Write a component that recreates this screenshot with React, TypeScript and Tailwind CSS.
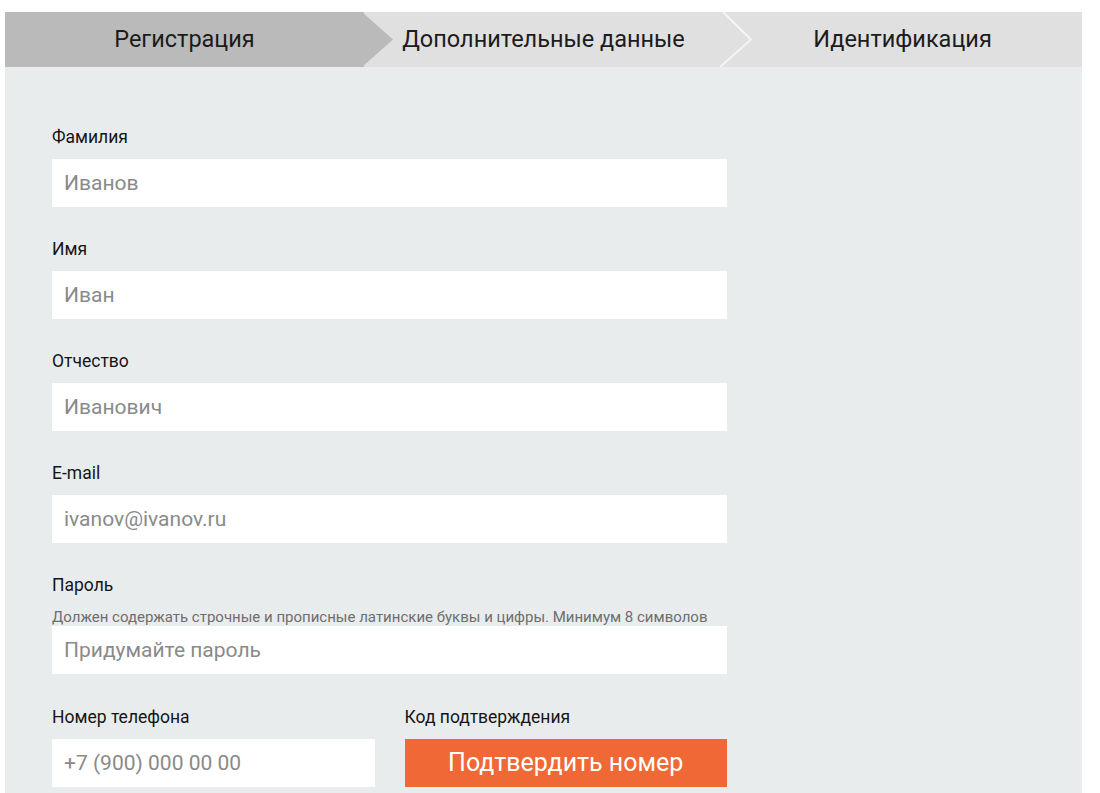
import React from "react";

const inputCls =
  "h-[48px] w-full bg-white px-3 text-[21px] text-[#333] outline-none placeholder:text-[#8a8a8a]";

function Field({ label, placeholder }: { label: string; placeholder: string }) {
  return (
    <div className="mb-[32px] flex flex-col">
      <label className="mb-[12px] text-[17.5px] leading-[20px] text-[#151515]">{label}</label>
      <input type="text" placeholder={placeholder} className={inputCls} />
    </div>
  );
}

export default function App() {
  return (
    <div className="min-h-screen bg-white pt-[12px] font-['Roboto',sans-serif]">
      <div className="ml-[5px] w-[1077px]">
        {/* шаги */}
        <div className="flex h-[55px] bg-[#e0e0e0] text-[23.5px] text-[#1c1c1c]">
          <div className="relative z-10 flex flex-1 items-center justify-center bg-[#bababa]">
            Регистрация
            <svg className="absolute left-full top-0 -ml-[2px]" width="33" height="55" viewBox="0 0 33 55">
              <polygon points="0,0 31,27.5 0,55" fill="#bababa" />
            </svg>
          </div>
          <div className="relative flex flex-1 items-center justify-center">
            Дополнительные данные
            <svg className="absolute left-full top-0 -ml-[3px]" width="36" height="55" viewBox="0 0 36 55">
              <polyline points="3,0 31,27.5 0,55" fill="none" stroke="#f5f5f5" strokeWidth="2" />
            </svg>
          </div>
          <div className="flex flex-1 items-center justify-center">Идентификация</div>
        </div>

        {/* форма */}
        <div className="bg-[#e9eced] px-[47px] pb-[40px] pt-[60px]">
          <div className="w-[675px]">
            <Field label="Фамилия" placeholder="Иванов" />
            <Field label="Имя" placeholder="Иван" />
            <Field label="Отчество" placeholder="Иванович" />
            <Field label="E-mail" placeholder="ivanov@ivanov.ru" />
            <div className="mb-[33px] flex flex-col">
              <label className="text-[17.5px] leading-[20px] text-[#151515]">Пароль</label>
              <span className="mt-[13px] whitespace-nowrap text-[15px] leading-[18px] text-[#6e6e6e]">
                Должен содержать строчные и прописные латинские буквы и цифры. Минимум 8 символов
              </span>
              <input type="password" placeholder="Придумайте пароль" className={inputCls} />
            </div>
            <div className="grid grid-cols-2 gap-[30px]">
              <div className="flex flex-col">
                <label className="mb-[12px] text-[17.5px] leading-[20px] text-[#151515]">Номер телефона</label>
                <input type="tel" placeholder="+7 (900) 000 00 00" className={inputCls} />
              </div>
              <div className="flex flex-col">
                <label className="mb-[12px] text-[17.5px] leading-[20px] text-[#151515]">Код подтверждения</label>
                <button className="h-[48px] w-full bg-[#ef6836] text-[25px] text-white">Подтвердить номер</button>
              </div>
            </div>
          </div>
        </div>
      </div>
    </div>
  );
}
